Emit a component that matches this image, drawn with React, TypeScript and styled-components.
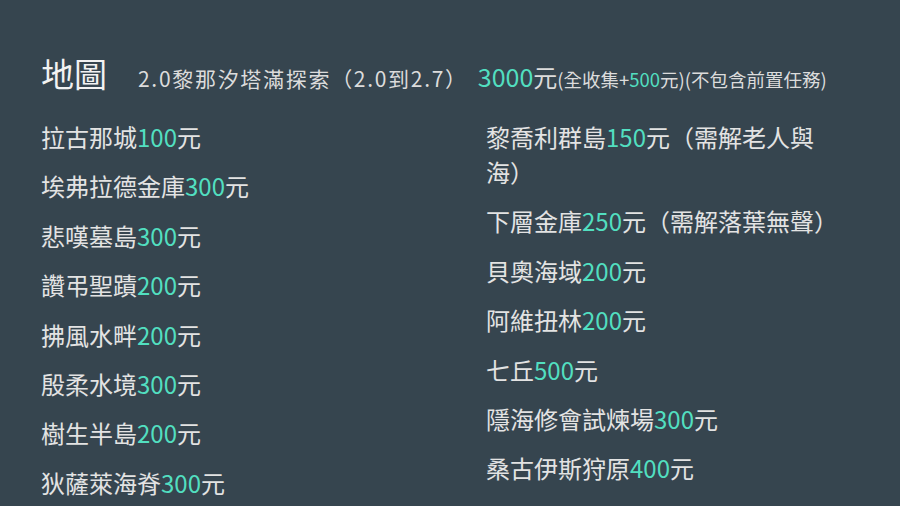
import styled, { createGlobalStyle } from 'styled-components';

const GlobalStyle = createGlobalStyle`
  html, body {
    margin: 0;
    padding: 0;
    background: #36454f;
  }
  body {
    font-family: "Noto Sans CJK TC", "Lato", sans-serif;
    color: #e3e3e3;
  }
`;

const Slide = styled.div`
  width: 900px;
  height: 506px;
  overflow: hidden;
  background: #36454f;
  box-sizing: border-box;
  padding: 49px 0 0 41px;
`;

const Header = styled.div`
  display: flex;
  align-items: baseline;
  white-space: nowrap;
  height: 48px;
`;

const Title = styled.h1`
  margin: 0 31px 0 0;
  font-size: 33px;
  font-weight: 400;
  color: #f2f2f2;
  line-height: 48px;
`;

const Sub = styled.span<{ $size: number; $accent?: boolean; $gap?: number; $spacing?: number }>`
  font-size: ${(p) => p.$size}px;
  color: ${(p) => (p.$accent ? '#52dfc0' : '#dcdcdc')};
  margin-left: ${(p) => p.$gap ?? 0}px;
  letter-spacing: ${(p) => p.$spacing ?? 0}px;
`;

const Accent = styled.span`
  color: #52dfc0;
`;

const Columns = styled.div`
  display: grid;
  grid-template-columns: 445px 352px;
  margin-top: 22px;
`;

const List = styled.div`
  display: flex;
  flex-direction: column;
`;

const Item = styled.div`
  font-size: 24px;
  line-height: 35px;
  margin-bottom: 14.4px;
  color: #e3e3e3;
`;

const left: [string, string][] = [
  ['拉古那城', '100'],
  ['埃弗拉德金庫', '300'],
  ['悲嘆墓島', '300'],
  ['讚弔聖蹟', '200'],
  ['拂風水畔', '200'],
  ['殷柔水境', '300'],
  ['樹生半島', '200'],
  ['狄薩萊海脊', '300'],
];

const right: [string, string, string][] = [
  ['黎喬利群島', '150', '（需解老人與海）'],
  ['下層金庫', '250', '（需解落葉無聲）'],
  ['貝奧海域', '200', ''],
  ['阿維扭林', '200', ''],
  ['七丘', '500', ''],
  ['隱海修會試煉場', '300', ''],
  ['桑古伊斯狩原', '400', ''],
];

export default function App() {
  return (
    <>
      <GlobalStyle />
      <Slide>
        <Header>
          <Title>地圖</Title>
          <Sub $size={21} $spacing={1.7}>
            2.0黎那汐塔滿探索（2.0到2.7）
          </Sub>
          <Sub $size={25} $accent $gap={10}>3000</Sub>
          <Sub $size={24}>元</Sub>
          <Sub $size={18.5}>
            (全收集+<Accent>500</Accent>元)(不包含前置任務)
          </Sub>
        </Header>
        <Columns>
          <List>
            {left.map(([name, price]) => (
              <Item key={name}>
                {name}
                <Accent>{price}</Accent>元
              </Item>
            ))}
          </List>
          <List>
            {right.map(([name, price, note]) => (
              <Item key={name}>
                {name}
                <Accent>{price}</Accent>元{note}
              </Item>
            ))}
          </List>
        </Columns>
      </Slide>
    </>
  );
}
